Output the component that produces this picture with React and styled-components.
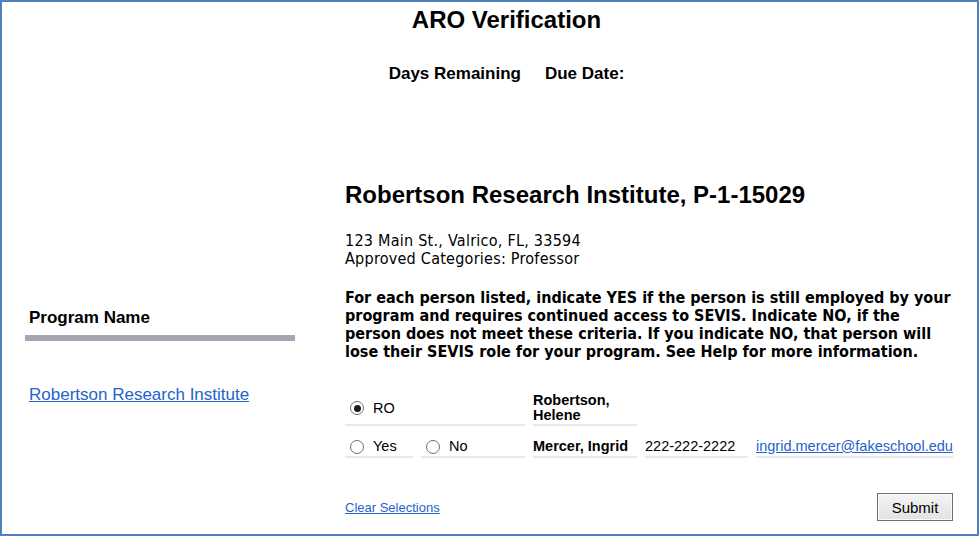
import React from "react";
import styled, { createGlobalStyle } from "styled-components";

const Global = createGlobalStyle`
  html, body { margin: 0; padding: 0; background: #fff; }
  body { font-family: "Liberation Sans", Arial, sans-serif; color: #000; }
`;

const Frame = styled.div`
  width: 979px;
  height: 536px;
  box-sizing: border-box;
  border: 2px solid #4f81bd;
  overflow: hidden;
`;

const Header = styled.header`
  padding: 4px 0 0 34px;
  text-align: center;
`;

const Title = styled.h1`
  margin: 0;
  font-size: 24px;
  line-height: 28px;
  font-weight: bold;
`;

const DueRow = styled.div`
  margin-top: 30px;
  display: flex;
  justify-content: center;
  gap: 24px;
  font-size: 17px;
  line-height: 20px;
  font-weight: bold;
`;

const Body = styled.div`
  display: flex;
  gap: 50px;
  padding-left: 23px;
`;

const Sidebar = styled.aside`
  width: 270px;
  padding-top: 224px;
`;

const SideHeading = styled.div`
  padding-left: 4px;
  font-size: 17px;
  line-height: 20px;
  font-weight: bold;
`;

const SideBar = styled.div`
  margin-top: 7px;
  height: 6px;
  background: #a5a5b3;
`;

const Link = styled.a`
  color: #2563c9;
  text-decoration: underline;
  font-size: ${(p) => p.$size || 17}px;
  cursor: pointer;
`;

const SideLink = styled.div`
  margin-top: 44px;
  padding-left: 4px;
  line-height: 20px;
`;

const Main = styled.main`
  width: 612px;
  padding-top: 97px;
`;

const ProgramTitle = styled.h2`
  margin: 0;
  font-size: 24px;
  line-height: 28px;
  font-weight: bold;
`;

const Address = styled.div`
  margin-top: 23px;
  font-family: "DejaVu Sans Condensed", "DejaVu Sans", sans-serif;
  font-stretch: condensed;
  font-size: 16px;
  letter-spacing: 0.25px;
  line-height: 17.5px;
`;

const Instructions = styled.p`
  margin: 22px 0 0;
  font-family: "DejaVu Sans Condensed", "DejaVu Sans", sans-serif;
  font-stretch: condensed;
  font-weight: bold;
  font-size: 16px;
  line-height: 18px;
`;

const Grid = styled.div`
  margin-top: 30px;
  display: grid;
  grid-template-columns: 68px 104px 104px 103px 197px;
  column-gap: 8px;
  row-gap: 10px;
  font-size: 14.5px;
`;

const Cell = styled.div`
  grid-column: ${(p) => p.$span || "auto"};
  display: flex;
  align-items: center;
  min-height: ${(p) => p.$h || 17}px;
  padding: 2px 0 1px;
  line-height: ${(p) => p.$lh || 17}px;
  border-bottom: ${(p) => (p.$plain ? "none" : "2px solid #e9e9e9")};
  font-weight: ${(p) => (p.$bold ? "bold" : "normal")};
  white-space: nowrap;
`;

const RadioLabel = styled.label`
  display: flex;
  align-items: center;
  gap: 9px;
  padding-left: 5px;
`;

const Radio = styled.span`
  width: 12px;
  height: 12px;
  border-radius: 50%;
  border: 1px solid #707070;
  background: #fff;
  display: inline-flex;
  align-items: center;
  justify-content: center;
  &::after {
    content: "";
    width: 7px;
    height: 7px;
    border-radius: 50%;
    background: ${(p) => (p.$checked ? "#1c1c1c" : "transparent")};
  }
`;

const Footer = styled.div`
  margin-top: 35px;
  display: flex;
  justify-content: space-between;
  align-items: center;
  width: 608px;
`;

const Button = styled.button`
  width: 76px;
  height: 28px;
  font-family: "Liberation Sans", Arial, sans-serif;
  font-size: 15px;
  color: #000;
  background: linear-gradient(#f4f4f4, #e2e2e2);
  border: 1px solid #707070;
  box-shadow: inset 0 0 0 1px #fbfbfb;
  border-radius: 0;
  padding: 0;
`;

export default function App() {
  return (
    <Frame>
      <Global />
      <Header>
        <Title>ARO Verification</Title>
        <DueRow>
          <span>Days Remaining</span>
          <span>Due Date:</span>
        </DueRow>
      </Header>
      <Body>
        <Sidebar>
          <SideHeading>Program Name</SideHeading>
          <SideBar />
          <SideLink>
            <Link>Robertson Research Institute</Link>
          </SideLink>
        </Sidebar>
        <Main>
          <ProgramTitle>Robertson Research Institute, P-1-15029</ProgramTitle>
          <Address>
            123 Main St., Valrico, FL, 33594
            <br />
            Approved Categories: Professor
          </Address>
          <Instructions>
            For each person listed, indicate YES if the person is still employed by your
            program and requires continued access to SEVIS. Indicate NO, if the person does
            not meet these criteria. If you indicate NO, that person will lose their SEVIS
            role for your program. See Help for more information.
          </Instructions>
          <Grid>
            <Cell $span="1 / span 2" $h={30}>
              <RadioLabel>
                <Radio $checked />
                RO
              </RadioLabel>
            </Cell>
            <Cell $bold $lh={15} $h={30}>
              Robertson,
              <br />
              Helene
            </Cell>
            <Cell $span="4 / span 2" $plain />
            <Cell>
              <RadioLabel>
                <Radio />
                Yes
              </RadioLabel>
            </Cell>
            <Cell>
              <RadioLabel>
                <Radio />
                No
              </RadioLabel>
            </Cell>
            <Cell $bold>Mercer, Ingrid</Cell>
            <Cell>222-222-2222</Cell>
            <Cell>
              <Link $size={14.5}>ingrid.mercer@fakeschool.edu</Link>
            </Cell>
          </Grid>
          <Footer>
            <Link $size={13}>Clear Selections</Link>
            <Button>Submit</Button>
          </Footer>
        </Main>
      </Body>
    </Frame>
  );
}
